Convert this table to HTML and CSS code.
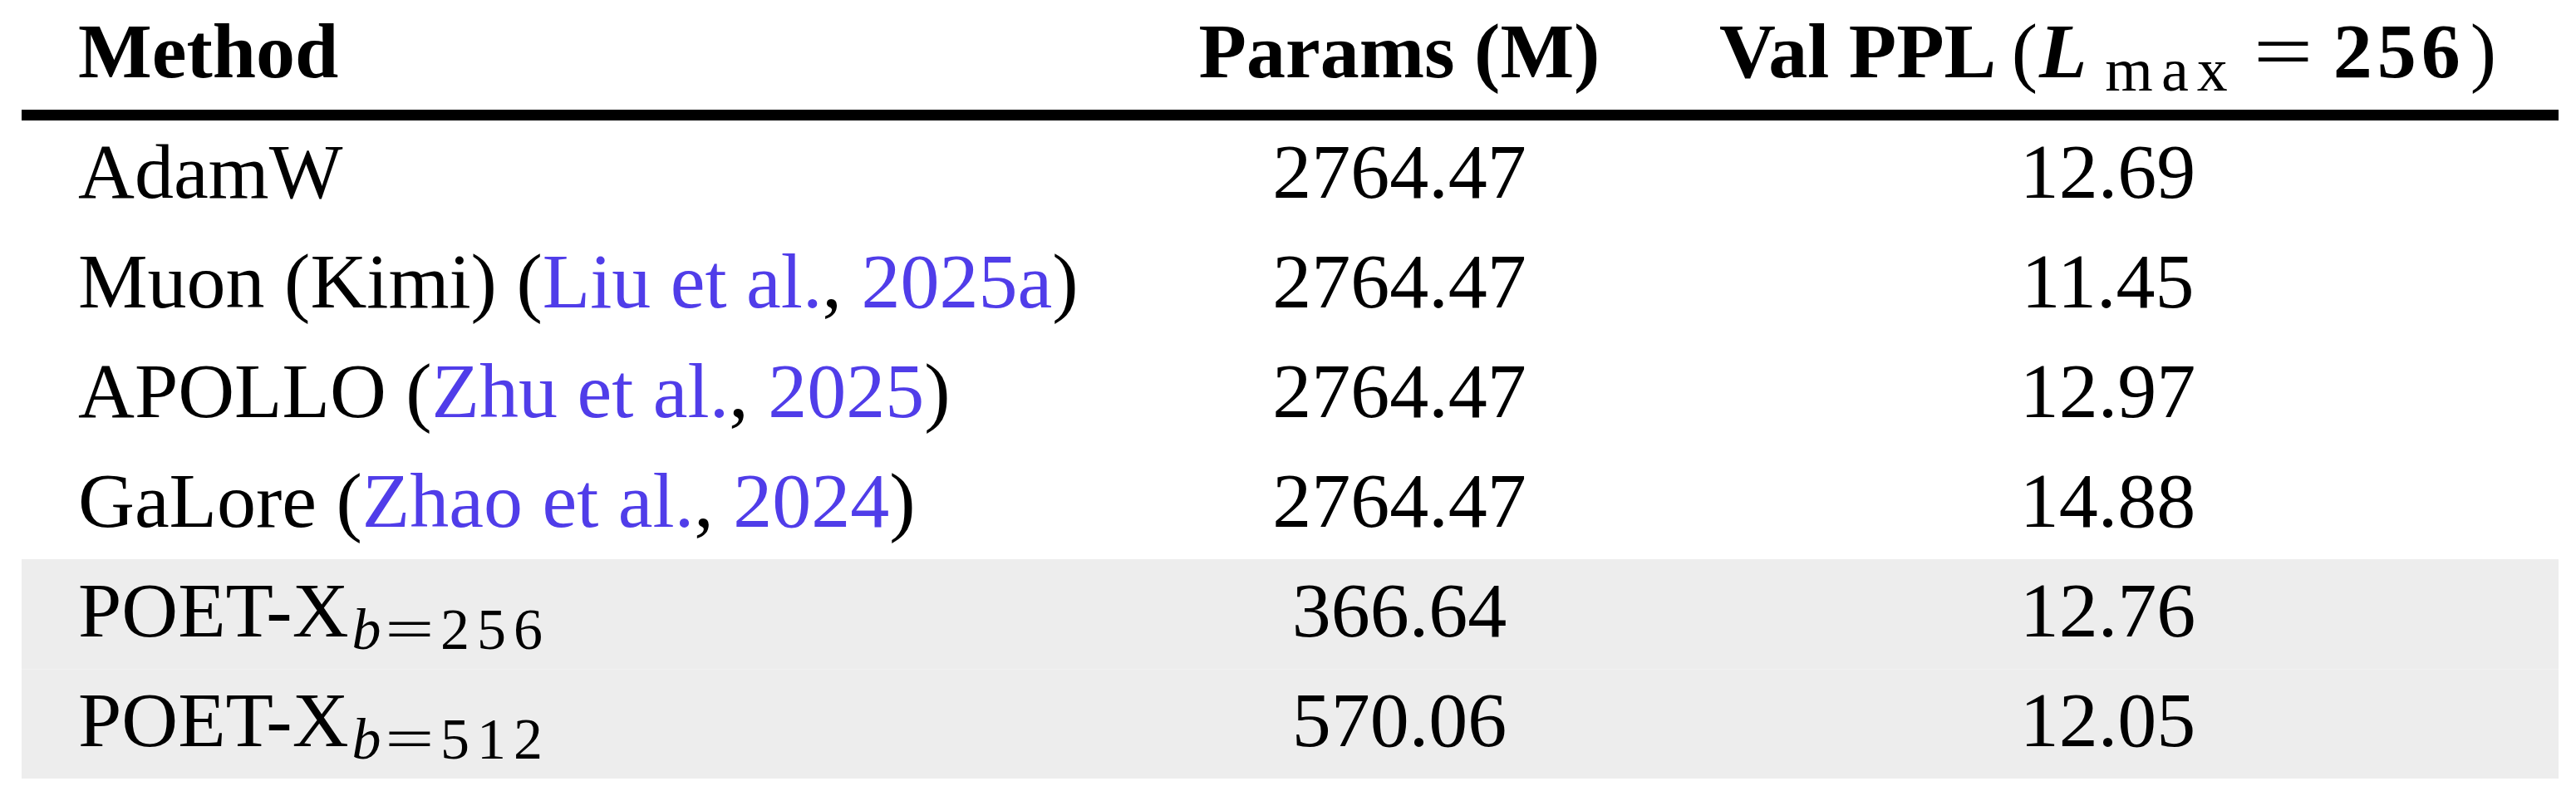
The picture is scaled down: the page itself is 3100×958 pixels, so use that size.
FILE: index.html
```html
<!DOCTYPE html>
<html lang="en">
<head>
  <meta charset="UTF-8">
  <title>POET-X results</title>
  <link rel="stylesheet" href="styles.css">
</head>
<body>
  <div class="results">
      <div class="row head">
          <div class="cell method">Method</div>
          <div class="cell">Params (M)</div>
          <div class="cell">Val PPL <span class="paren">(</span><span class="sym">L</span><span class="sub-max">max</span><span class="eq">=</span><span class="num">256</span><span class="paren close">)</span></div>
      </div>

      <div class="row">
          <div class="cell method">AdamW</div>
          <div class="cell">2764.47</div>
          <div class="cell">12.69</div>
      </div>
      <div class="row">
          <div class="cell method">Muon (Kimi) (<span class="cite">Liu et al.</span>, <span class="cite">2025a</span>)</div>
          <div class="cell">2764.47</div>
          <div class="cell">11.45</div>
      </div>
      <div class="row">
          <div class="cell method">APOLLO (<span class="cite">Zhu et al.</span>, <span class="cite">2025</span>)</div>
          <div class="cell">2764.47</div>
          <div class="cell">12.97</div>
      </div>
      <div class="row">
          <div class="cell method">GaLore (<span class="cite">Zhao et al.</span>, <span class="cite">2024</span>)</div>
          <div class="cell">2764.47</div>
          <div class="cell">14.88</div>
      </div>

      <div class="row ours">
          <div class="cell method">POET-X<span class="sub"><i>b</i><span class="eq">=</span><span class="digits">256</span></span></div>
          <div class="cell">366.64</div>
          <div class="cell">12.76</div>
      </div>
      <div class="row ours">
          <div class="cell method">POET-X<span class="sub"><i>b</i><span class="eq">=</span><span class="digits">512</span></span></div>
          <div class="cell">570.06</div>
          <div class="cell">12.05</div>
      </div>
  </div>
</body>
</html>
```

FILE: styles.css
```css
body {
    margin: 0;
    background: #ffffff;
    font-family: 'Liberation Serif', 'Times New Roman', serif;
    color: #000;
}

.results {
    margin-left: 26px;
    width: 3053px;
}

.row {
    display: grid;
    grid-template-columns: 1348px 620px 1085px;
    height: 132px;
    box-sizing: border-box;
    font-size: 94px;
    line-height: 122px;
}

.cell {
    text-align: center;
    white-space: nowrap;
}

.cell.method {
    text-align: left;
    padding-left: 68px;
}

.head {
    height: 145px;
    font-weight: bold;
    border-bottom: 13px solid #000;
}

.cite {
    color: #503de9;
}

.ours {
    background: #ededed;
}

.ours + .ours {
    border-top: 1px solid #f1f1f1;
    line-height: 120px;
}

/* header math: (L_max = 256) */
.paren {
    font-weight: normal;
}

.paren.close {
    margin-left: 6px;
}

.sym {
    font-style: italic;
    font-weight: bold;
    margin-left: 2px;
}

.sub-max {
    font-weight: normal;
    font-size: 74px;
    letter-spacing: 10px;
    margin-left: 22px;
    vertical-align: -16px;
    line-height: 0;
}

.eq {
    display: inline-block;
    font-weight: normal;
    transform: scaleX(1.36);
}

.head .eq {
    margin: 0 34px 0 30px;
}

.num {
    letter-spacing: 6px;
}

/* POET-X subscripts */
.sub {
    font-size: 70px;
    vertical-align: -15px;
    line-height: 0;
    margin-left: 4px;
}

.sub .eq {
    transform: scaleX(1.5);
    margin: 0 18px 0 14px;
}

.digits {
    letter-spacing: 9px;
}
```
